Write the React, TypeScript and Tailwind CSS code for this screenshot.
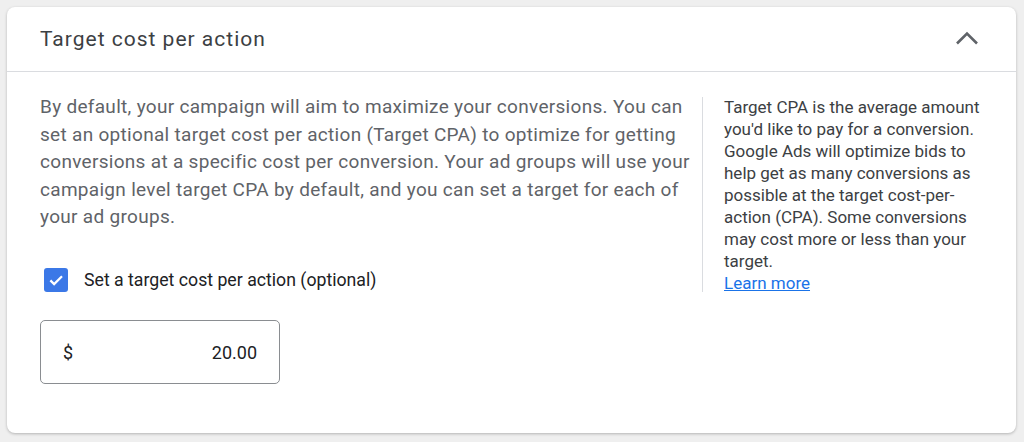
import React from "react";

export default function App() {
  return (
    <div className="w-[1024px] h-[442px] bg-[#efefef] pt-[7px] pl-[7px] pr-[8px] pb-[9px] font-['Roboto',_'Liberation_Sans',_sans-serif]">
      <div className="w-full h-full bg-white rounded-[8px] shadow-[0_1px_3px_rgba(0,0,0,0.25)] flex flex-col">
        <div className="h-[65px] border-b border-[#dadce0] flex items-center justify-between pl-[33px] pr-[37px]">
          <div className="text-[21px] tracking-[1px] text-[#3c4043] leading-none">Target cost per action</div>
          <svg width="24" height="14" viewBox="0 0 24 14" className="mt-[-2px]">
            <polyline points="2,12.5 12,2.5 22,12.5" fill="none" stroke="#5f6368" strokeWidth="2.6" />
          </svg>
        </div>
        <div className="flex pl-[33px] pt-[21px]">
          <div className="w-[662px] flex flex-col">
            <p className="w-[658px] text-[19px] tracking-[0.3px] leading-[27.5px] text-[#5f6368]">
              By default, your campaign will aim to maximize your conversions. You can set an optional target cost per action (Target CPA) to optimize for getting conversions at a specific cost per conversion. Your ad groups will use your campaign level target CPA by default, and you can set a target for each of your ad groups.
            </p>
            <label className="flex items-center mt-[36px] ml-[4px]">
              <span className="w-[24px] h-[24px] rounded-[3px] bg-[#3b78e7] flex items-center justify-center">
                <svg width="18" height="18" viewBox="0 0 24 24">
                  <path d="M4.5 12.5l5 5L20 7" fill="none" stroke="white" strokeWidth="3" />
                </svg>
              </span>
              <span className="ml-[16px] text-[17.7px] text-[#202124]">Set a target cost per action (optional)</span>
            </label>
            <div className="mt-[27px] w-[240px] h-[64px] border border-[#8a8d91] rounded-[5px] flex items-center justify-between pl-[22px] pr-[22px] text-[18px] text-[#202124]">
              <span>$</span>
              <span>20.00</span>
            </div>
          </div>
          <div className="mt-[4px] h-[195px] border-l border-[#dadce0]" />
          <div className="pl-[21px] pt-[3px]">
            <p className="w-[268px] text-[17px] leading-[22px] text-[#3c4043]">
              Target CPA is the average amount you'd like to pay for a conversion. Google Ads will optimize bids to help get as many conversions as possible at the target cost-per-action (CPA). Some conversions may cost more or less than your target.
              <br />
              <a className="text-[#1a73e8] underline">Learn more</a>
            </p>
          </div>
        </div>
      </div>
    </div>
  );
}
